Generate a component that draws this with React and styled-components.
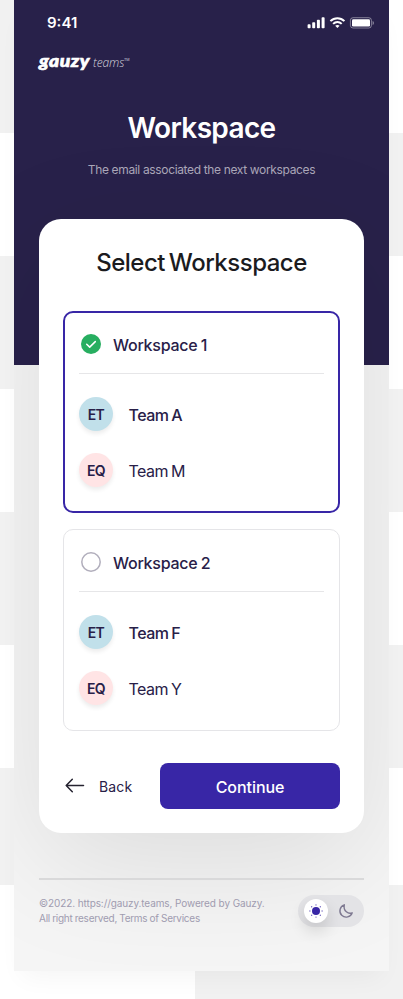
import React from "react";
import styled, { createGlobalStyle } from "styled-components";

const GlobalStyle = createGlobalStyle`
  * { box-sizing: border-box; }
  html, body { margin: 0; padding: 0; }
  body { font-family: Inter, "Open Sans", sans-serif; color: #282048; overflow: hidden; }
  button { font: inherit; color: inherit; border: 0; padding: 0; background: none; }
`;

const stripes = (a, b) =>
  `linear-gradient(${a} 0 133px, ${b} 133px 256px, ${a} 256px 389px, ${b} 389px 512px, ${a} 512px 645px, ${b} 645px 768px, ${a} 768px 885px, ${b} 885px)`;

const Backdrop = styled.div`
  width: 403px;
  height: 999px;
  padding-left: 14px;
  background:
    ${stripes("#f1f1f1", "#ffffff")} 0 0 / 195px 999px no-repeat,
    ${stripes("#ffffff", "#f1f1f1")} 195px 0 / 208px 999px no-repeat;
`;

const Phone = styled.main`
  width: 375px;
  height: 971px;
  padding: 0 25px;
  overflow: hidden;
  background: linear-gradient(#28214a 0 365px, #f5f5f5 365px);
`;

const PhoneShadow = styled.div`
  width: 375px;
  height: 971px;
  box-shadow: 0 14px 24px -8px rgba(0, 0, 0, 0.045);
`;

const StatusBar = styled.div`
  height: 46px;
  margin-right: -10px;
  padding-left: 8px;
  display: flex;
  align-items: center;
  justify-content: space-between;
  color: #fff;
`;

const Txt = styled.span`
  display: block;
  margin: 0;
  padding-top: ${(p) => p.$drop || 0}px;
  white-space: nowrap;
  font-size: ${(p) => p.$size}px;
  font-weight: ${(p) => p.$weight || 400};
  line-height: ${(p) => p.$line || 20}px;
  letter-spacing: ${(p) => p.$track || 0}px;
  word-spacing: ${(p) => p.$word || 0}px;
  color: ${(p) => p.$color || "inherit"};
`;

const StatusIcons = styled.svg`
  display: block;
`;

const Logo = styled.div`
  height: 32px;
  display: flex;
  color: #fff;
  white-space: nowrap;
`;

const LogoName = styled.span`
  width: 54px;
  font: italic 900 16px/30px Lato, sans-serif;
  letter-spacing: 0.4px;
  -webkit-text-stroke: 0.6px #fff;
  transform: scaleX(1.21);
  transform-origin: 0 50%;
`;

const LogoSuffix = styled.span`
  width: 31px;
  font: italic 300 12px/33px "Open Sans", sans-serif;
  letter-spacing: -0.1px;
  color: #d6d4de;
`;

const LogoMark = styled.span`
  font: 400 3.6px/5px Inter, sans-serif;
  margin-top: 12px;
  color: #d6d4de;
`;

const Heading = styled.header`
  height: 141px;
  padding-top: 30px;
  display: flex;
  flex-direction: column;
  align-items: center;
  gap: 13px;
`;

const Card = styled.section`
  height: 614px;
  padding: 27px 24px 24px;
  border-radius: 22px;
  background: #fff;
  box-shadow: 0 30px 120px rgba(0, 0, 0, 0.1);
  display: flex;
  flex-direction: column;
`;

const CardTitle = styled.header`
  margin: 0 0 33px;
  height: 32px;
  display: flex;
  justify-content: center;
`;

const WorkspaceBox = styled.article`
  flex: none;
  height: 202px;
  margin-bottom: 16px;
  border: ${(p) => (p.$selected ? "2px solid #3826a6" : "1px solid #e5e5e8")};
  border-radius: 10px;
  padding: ${(p) => (p.$selected ? "0 14px" : "0 15px")};
`;

const BoxHead = styled.div`
  height: ${(p) => (p.$selected ? 61 : 62)}px;
  margin-bottom: 23px;
  padding-left: 2px;
  padding-top: ${(p) => (p.$selected ? 2 : 3)}px;
  display: flex;
  align-items: center;
  gap: 12px;
  border-bottom: 1px solid #e6e6e8;
`;

const TeamRow = styled.div`
  display: flex;
  align-items: center;
  gap: 15.5px;
  height: 34px;
  margin-bottom: 22px;
`;

const Avatar = styled.span`
  width: 34px;
  height: 34px;
  border-radius: 50%;
  display: grid;
  place-items: center;
  background: ${(p) => p.$tint};
  box-shadow: 0 3px 4px rgba(0, 0, 0, 0.075);
`;

const Actions = styled.div`
  display: flex;
  align-items: center;
  height: 46px;
  margin-top: 16px;
`;

const BackButton = styled.button`
  width: 97px;
  padding-left: 2px;
  display: flex;
  align-items: center;
  gap: 14px;
`;

const ContinueButton = styled.button`
  width: 180px;
  height: 46px;
  display: grid;
  place-items: center;
  background: #3826a6;
  color: #fff;
  border-radius: 8px;
`;

const Footer = styled.footer`
  margin-top: 45px;
  border-top: 2px solid #d9d9da;
  padding-top: 15px;
  display: flex;
  justify-content: space-between;
`;

const ThemeSwitch = styled.div`
  width: 66px;
  height: 32px;
  padding: 4px 10px 4px 6px;
  border-radius: 16px;
  background: #e3e3e6;
  display: flex;
  align-items: center;
  justify-content: space-between;
`;

const Knob = styled.span`
  width: 24px;
  height: 24px;
  border-radius: 50%;
  display: grid;
  place-items: center;
  background: #fff;
  box-shadow: 0 8px 16px rgba(0, 0, 0, 0.14);
`;

const Icon = styled.svg`
  display: block;
  flex: none;
`;

function StatusGlyphs() {
  return (
    <StatusIcons width="67" height="14" viewBox="0 0 67 14" fill="#fff">
      <rect x="0.6" y="8.2" width="3" height="4" rx="0.8" />
      <rect x="5.2" y="6.2" width="3" height="6" rx="0.8" />
      <rect x="9.9" y="3.8" width="3" height="8.4" rx="0.8" />
      <rect x="14.6" y="1.3" width="3" height="10.9" rx="0.8" />
      <g fill="none" stroke="#fff" strokeWidth="2">
        <path d="M23.4 5.1c4-3.9 10-3.9 14 0" />
        <path d="M26.1 7.9c2.5-2.4 6.1-2.4 8.6 0" />
      </g>
      <path d="M28.2 9.8c1.3-1.1 3.1-1.1 4.4 0l-2.2 2.3z" />
      <rect x="43.4" y="1.7" width="21" height="10.3" rx="2.6" fill="none" stroke="#fff" strokeOpacity=".42" />
      <rect x="45" y="3.2" width="18" height="7.4" rx="1.3" />
      <path d="M65.6 5v4c.8-.3 1.200-1.100 1.200-2S66.400 5.300 65.600 5z" opacity=".5" />
    </StatusIcons>
  );
}

function Radio({ selected }) {
  return (
    <Icon width="20" height="20" viewBox="0 0 20 20" fill="none">
      {selected ? (
        <>
          <circle cx="10" cy="10" r="10" fill="#27ae60" />
          <path d="m5.7 10.2 3 2.9 5.600-5.500" stroke="#fff" strokeWidth="1.5" strokeLinecap="round" strokeLinejoin="round" />
        </>
      ) : (
        <circle cx="10" cy="10" r="9.2" stroke="#b1aebc" strokeWidth="1.5" />
      )}
    </Icon>
  );
}

function Workspace({ name, selected, teams }) {
  return (
    <WorkspaceBox $selected={selected}>
      <BoxHead $selected={selected}>
        <Radio selected={selected} />
        <Txt $size={16} $weight={500} $track={-0.25} $word={-0.8} $drop={1.5}>{name}</Txt>
      </BoxHead>
      {teams.map((t) => (
        <TeamRow key={t.name}>
          <Avatar $tint={t.tint}>
            <Txt $size={14} $weight={600} $track={-0.6} $drop={1}>{t.code}</Txt>
          </Avatar>
          <Txt $size={16} $weight={t.weight} $track={-0.5} $word={-1} $drop={2}>{t.name}</Txt>
        </TeamRow>
      ))}
    </WorkspaceBox>
  );
}

const BLUE = "#c1e0ea";
const PINK = "#ffe4e5";

const workspaces = [
  {
    name: "Workspace 1",
    selected: true,
    teams: [
      { code: "ET", name: "Team A", tint: BLUE, weight: 500 },
      { code: "EQ", name: "Team M", tint: PINK, weight: 400 },
    ],
  },
  {
    name: "Workspace 2",
    selected: false,
    teams: [
      { code: "ET", name: "Team F", tint: BLUE, weight: 500 },
      { code: "EQ", name: "Team Y", tint: PINK, weight: 400 },
    ],
  },
];

const rays = [0, 45, 90, 135, 180, 225, 270, 315];

export default function App() {
  return (
    <Backdrop>
      <GlobalStyle />
      <PhoneShadow>
        <Phone>
          <StatusBar>
            <Txt $size={15} $weight={600}>9:41</Txt>
            <StatusGlyphs />
          </StatusBar>
          <Logo>
            <LogoName>gauzy</LogoName>
            <LogoSuffix>teams</LogoSuffix>
            <LogoMark>TM</LogoMark>
          </Logo>
          <Heading>
            <Txt as="h1" $size={28} $weight={600} $line={38} $track={-0.65} $drop={1} $color="#fff">Workspace</Txt>
            <Txt $size={12} $track={-0.35} $color="#aaa6b8">The email associated the next workspaces</Txt>
          </Heading>
          <Card>
            <CardTitle>
              <Txt as="h2" $size={24} $weight={500} $line={32} $track={-0.5} $word={-2} $drop={1} $color="#1b1b1e">Select Worksspace</Txt>
            </CardTitle>
            {workspaces.map((w) => (
              <Workspace key={w.name} {...w} />
            ))}
            <Actions>
              <BackButton>
                <Icon width="20" height="16" viewBox="0 0 20 16" fill="none" stroke="#252330" strokeWidth="1.5" strokeLinecap="round" strokeLinejoin="round">
                  <path d="M18.5 7.500H1.200M7.300 1.200l-6.100 6.300 6.100 6.300" />
                </Icon>
                <Txt $size={14} $track={0.15} $drop={2}>Back</Txt>
              </BackButton>
              <ContinueButton>
                <Txt $size={16} $weight={500} $track={-0.05} $drop={1}>Continue</Txt>
              </ContinueButton>
            </Actions>
          </Card>
          <Footer>
            <div>
              <Txt $size={10} $line={15} $track={-0.1} $drop={1} $color="#a09cb0">©2022. https://gauzy.teams, Powered by Gauzy.</Txt>
              <Txt $size={10} $line={15} $track={-0.27} $word={-0.3} $color="#a09cb0">All right reserved, Terms of Services</Txt>
            </div>
            <ThemeSwitch>
              <Knob>
                <Icon width="16" height="16" viewBox="0 0 16 16" fill="#3826a6">
                  <circle cx="8" cy="8" r="4" />
                  {rays.map((a) => (
                    <circle key={a} cx="8" cy="1.9" r="0.65" opacity=".75" transform={`rotate(${a} 8 8)`} />
                  ))}
                </Icon>
              </Knob>
              <Icon width="16" height="16" viewBox="0 0 16 16" fill="none" stroke="#7e7991" strokeWidth="1.4" strokeLinejoin="round">
                <path d="M6.300 1.800A6.300 6.300 0 1 0 14.200 9.800C10.500 11.500 5 8.200 6.300 1.800z" />
              </Icon>
            </ThemeSwitch>
          </Footer>
        </Phone>
      </PhoneShadow>
    </Backdrop>
  );
}
